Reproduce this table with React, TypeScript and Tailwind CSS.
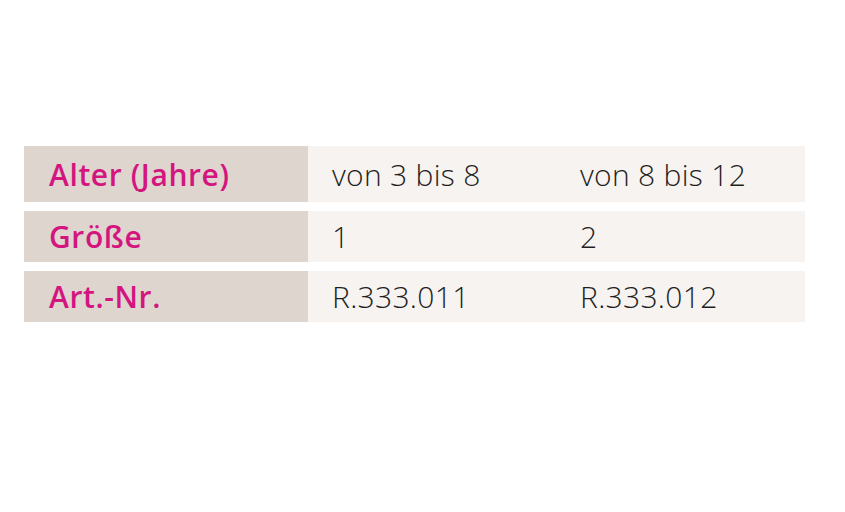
const rows = [
  { label: 'Alter (Jahre)', a: 'von 3 bis 8', b: 'von 8 bis 12', h: 'h-[56px]' },
  { label: 'Größe', a: '1', b: '2', h: 'h-[51px]' },
  { label: 'Art.-Nr.', a: 'R.333.011', b: 'R.333.012', h: 'h-[51px]' },
];

export default function App() {
  return (
    <div className="w-[845px] h-[512px] bg-white pt-[146px] pl-[24px]" style={{ fontFamily: '"Open Sans", sans-serif' }}>
      <div className="w-[781px] flex flex-col gap-[9px]">
        {rows.map(r => (
          <div key={r.label} className={`grid grid-cols-[284px_248px_1fr] ${r.h}`}>
            <div className="bg-[#ddd5ce] flex items-center pl-[25px] text-[30px] font-semibold tracking-[0.6px] text-[#d4157f]">
              {r.label}
            </div>
            <div className="bg-[#f6f3f0] flex items-center pl-[24px] text-[30px] font-light tracking-[0.3px] text-[#1f1f1f]">
              {r.a}
            </div>
            <div className="bg-[#f6f3f0] flex items-center pl-[24px] text-[30px] font-light tracking-[0.3px] text-[#1f1f1f]">
              {r.b}
            </div>
          </div>
        ))}
      </div>
    </div>
  );
}
